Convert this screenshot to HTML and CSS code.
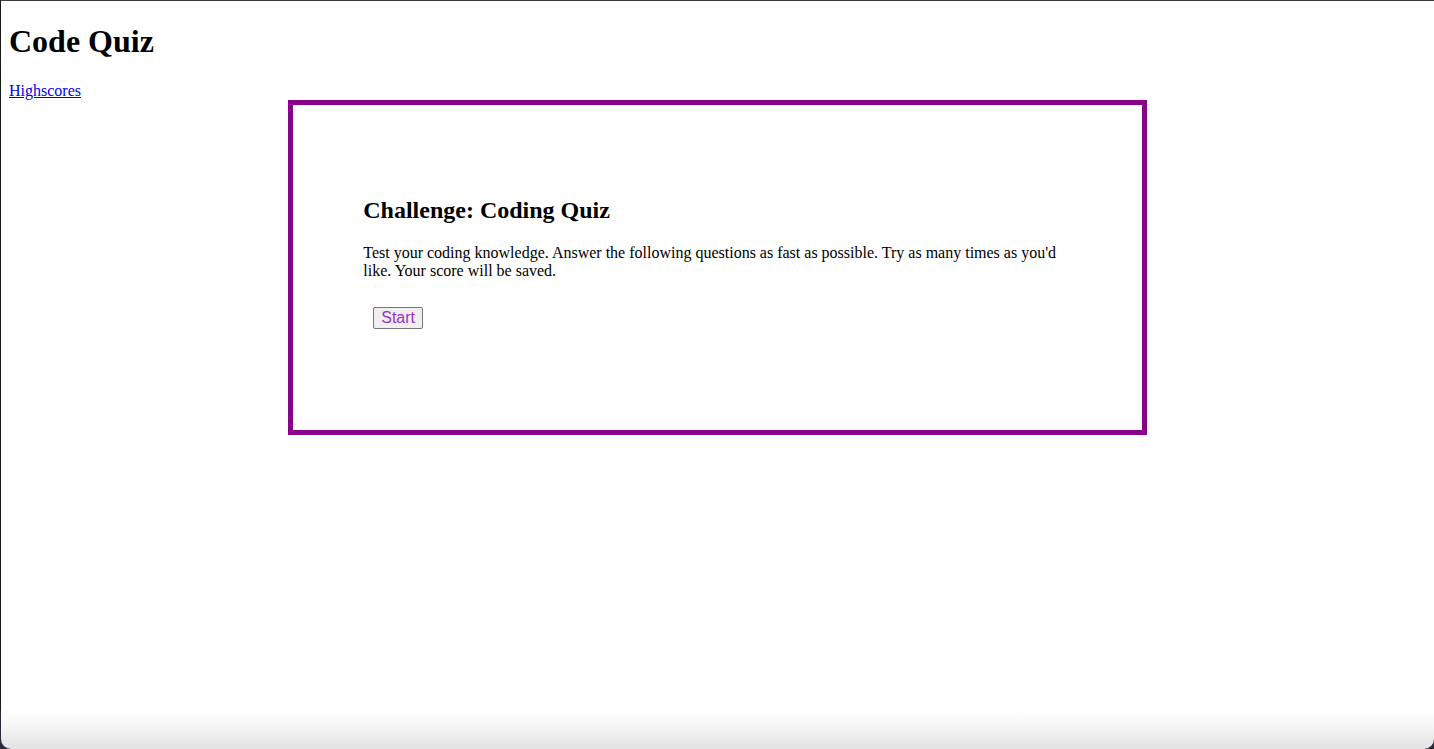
FILE: index.html
```html
<!DOCTYPE html>
<html lang="en">
<head>
<meta charset="utf-8">
<title>Code Quiz</title>
<link rel="stylesheet" href="styles.css">
</head>
<body>
<header class="site-header">
  <h1 class="site-title">Code Quiz</h1>
  <nav class="site-nav"><a href="#" class="highscores-link">Highscores</a></nav>
</header>
<main class="quiz-box">
  <h2 class="quiz-title">Challenge: Coding Quiz</h2>
  <p class="quiz-intro">Test your coding knowledge. Answer the following questions as fast as possible. Try as many times as you'd like. Your score will be saved.</p>
  <div class="quiz-actions">
    <button class="start-btn" type="button">Start</button>
  </div>
</main>
<div class="frame-bottom"><div class="frame-shade"></div></div>
</body>
</html>
```

FILE: styles.css
```css
html {
  border-top: 1px solid #3c3c3c;
  border-left: 1px solid #1a1a1a;
  background: #fff;
  min-height: 100vh;
  box-sizing: border-box;
}

body {
  margin: 0 8px 8px;
  font-family: "Liberation Serif", "Times New Roman", serif;
  font-size: 16px;
  color: #000;
}

.site-title {
  font-size: 32px;
  font-weight: bold;
  margin: 22.44px 0 21.44px;
}

.highscores-link {
  color: #0000ee;
  text-decoration: underline;
}

.quiz-box {
  display: block;
  width: 50%;
  margin: 0 auto;
  border: 5px solid #8b008b;
  padding: 72px 70px 71px;
}

.quiz-title {
  font-size: 24px;
  font-weight: bold;
  margin: 19.92px 0;
}

.quiz-intro {
  margin: 16px 0;
}

.quiz-actions {
  padding: 11px 0 30px 10px;
}

.start-btn {
  display: block;
  font-family: "Liberation Sans", Arial, sans-serif;
  font-size: 16px;
  line-height: 18px;
  color: #9932cc;
  background: #efefef;
  border: 1px solid #767676;
  border-radius: 2px;
  padding: 1px 7px;
  margin: 0;
}

.frame-bottom {
  position: fixed;
  left: 0;
  right: 0;
  bottom: 0;
  height: 38px;
  background: #2a2a3a;
}

.frame-shade {
  height: 100%;
  margin-left: 1px;
  background: linear-gradient(to bottom, #ffffff 0%, #f6f6f6 40%, #e2e2e2 100%);
  border-bottom-left-radius: 10px;
  border-bottom-right-radius: 10px;
}
```
